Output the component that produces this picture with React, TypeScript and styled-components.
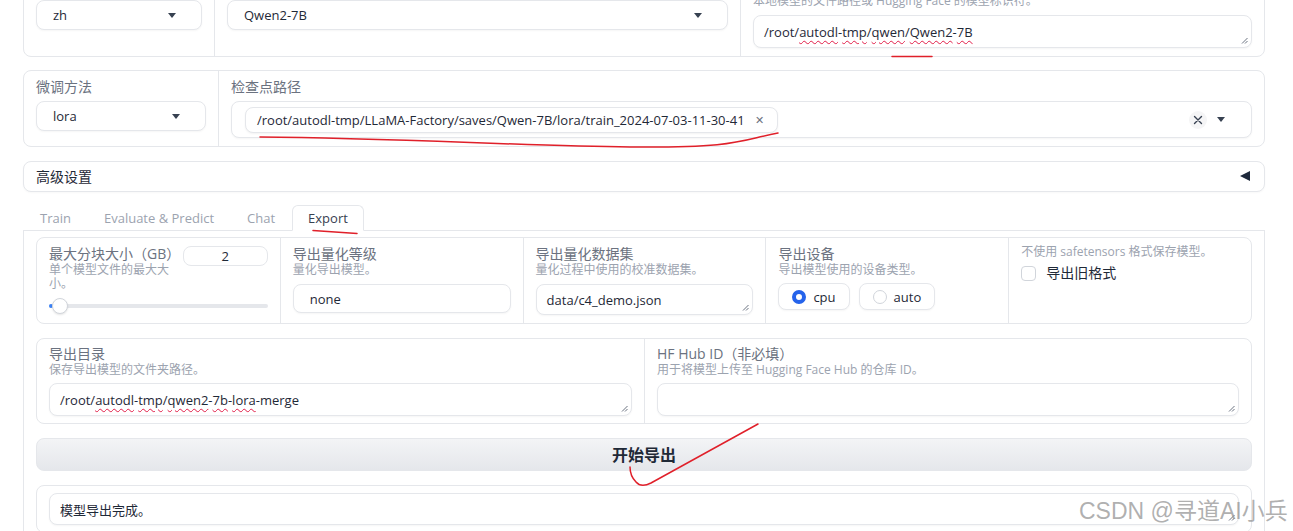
import React from "react";
import styled, { createGlobalStyle } from "styled-components";

const Global = createGlobalStyle`
  html, body { margin: 0; padding: 0; background: #ffffff; }
  body {
    font-family: "Open Sans", "Noto Sans CJK SC", sans-serif;
    color: #1f2937;
    overflow: hidden;
  }
  * { box-sizing: border-box; }
`;

const Page = styled.div`
  position: relative;
  width: 1293px;
  height: 531px;
  overflow: hidden;
`;

const Content = styled.div`
  display: flex;
  flex-direction: column;
  gap: 13px;
  margin: -32px 28px 0 23px;
`;

const Panel = styled.div<{ $cols: string }>`
  display: grid;
  grid-template-columns: ${(p) => p.$cols};
  border: 1px solid #e5e7eb;
  border-radius: 8px;
  background: #fff;
`;

const Col = styled.div<{ $pad?: string }>`
  display: flex;
  flex-direction: column;
  min-width: 0;
  padding: ${(p) => p.$pad ?? "7px 12px 8px"};
  & + & { border-left: 1px solid #e5e7eb; }
`;

const Label = styled.div`
  font-size: 14px;
  line-height: 18px;
  color: #6b7280;
  white-space: nowrap;
`;

const Info = styled.div<{ $maxw?: number }>`
  font-size: 12px;
  line-height: 14px;
  color: #9ca3af;
  max-width: ${(p) => (p.$maxw ? `${p.$maxw}px` : "none")};
`;

const Select = styled.div<{ $h?: number; $mt?: number }>`
  height: ${(p) => p.$h ?? 30}px;
  margin-top: ${(p) => p.$mt ?? 0}px;
  display: flex;
  align-items: center;
  justify-content: space-between;
  padding: 0 25px 0 16px;
  border: 1px solid #e5e7eb;
  border-radius: 8px;
  background: #fff;
  box-shadow: 0 1px 2px rgba(0, 0, 0, 0.04);
  font-size: 13px;
  color: #1f2937;
`;

const Caret = styled.span`
  width: 0;
  height: 0;
  border-left: 4.5px solid transparent;
  border-right: 4.5px solid transparent;
  border-top: 5px solid #374151;
`;

const TextBox = styled.div<{ $h: number; $mt?: number }>`
  position: relative;
  height: ${(p) => p.$h}px;
  margin-top: ${(p) => p.$mt ?? 0}px;
  display: flex;
  align-items: center;
  padding: 0 10px;
  border: 1px solid #e5e7eb;
  border-radius: 8px;
  background: #fff;
  box-shadow: 0 1px 2px rgba(0, 0, 0, 0.04);
  font-size: 13px;
  color: #1f2937;
  white-space: nowrap;
`;

const Sq = styled.span`
  text-decoration: underline wavy #e11d48;
  text-decoration-thickness: 1px;
  text-underline-offset: 3px;
`;

const GripSvg = styled.svg`
  position: absolute;
  right: 3px;
  bottom: 3px;
`;

const Grip = () => (
  <GripSvg width="7" height="7" viewBox="0 0 7 7">
    <path d="M6.5 1 L1 6.5 M6.5 4 L4 6.5" stroke="#6b7280" strokeWidth="1" />
  </GripSvg>
);

const Multi = styled.div`
  height: 37px;
  margin-top: 5px;
  display: flex;
  align-items: center;
  padding: 0 26px 0 13px;
  border: 1px solid #e5e7eb;
  border-radius: 8px;
  background: #fff;
  box-shadow: 0 1px 2px rgba(0, 0, 0, 0.04);
`;

const Chip = styled.div`
  height: 26px;
  display: flex;
  align-items: center;
  gap: 10px;
  padding: 0 13px 0 11px;
  border: 1px solid #e5e7eb;
  border-radius: 8px;
  background: #fff;
  box-shadow: 0 1px 2px rgba(0, 0, 0, 0.05);
  font-size: 13px;
  color: #1f2937;
  white-space: nowrap;
`;

const ChipX = styled.span`
  font-size: 11px;
  color: #6b7280;
`;

const MultiTail = styled.div`
  margin-left: auto;
  display: flex;
  align-items: center;
  gap: 10px;
`;

const ClearBtn = styled.span`
  width: 18px;
  height: 18px;
  border-radius: 50%;
  background: #f5f5f6;
  display: flex;
  align-items: center;
  justify-content: center;
`;

const Accordion = styled.div`
  height: 31px;
  margin-top: 1px;
  display: flex;
  align-items: center;
  justify-content: space-between;
  padding: 0 14px 2px 12px;
  border: 1px solid #e5e7eb;
  border-radius: 8px;
  background: #fff;
  box-shadow: 0 1px 2px rgba(0, 0, 0, 0.03);
  font-size: 14px;
  color: #1f2937;
`;

const LeftTri = styled.span`
  width: 0;
  height: 0;
  border-top: 5px solid transparent;
  border-bottom: 5px solid transparent;
  border-right: 10px solid #1e293b;
`;

const Tabs = styled.div`
  display: flex;
  flex-direction: column;
`;

const TabBar = styled.div`
  height: 26px;
  display: flex;
  gap: 1px;
  padding-left: 1px;
  border-bottom: 1px solid #e5e7eb;
`;

const Tab = styled.div<{ $active?: boolean }>`
  height: 26px;
  margin-bottom: -1px;
  padding: 0 15px 1px;
  display: flex;
  align-items: center;
  font-size: 13px;
  color: ${(p) => (p.$active ? "#374151" : "#9ca3af")};
  border: 1px solid ${(p) => (p.$active ? "#e5e7eb" : "transparent")};
  border-bottom-color: ${(p) => (p.$active ? "#fff" : "transparent")};
  border-radius: 6px 6px 0 0;
  background: ${(p) => (p.$active ? "#fff" : "transparent")};
`;

const TabBody = styled.div`
  display: flex;
  flex-direction: column;
  gap: 14px;
  padding: 6px 12px 40px;
  border: 1px solid #e5e7eb;
  border-top: none;
`;

const SizeRow = styled.div`
  display: flex;
  justify-content: space-between;
  align-items: flex-start;
`;

const SizeText = styled.div`
  display: flex;
  flex-direction: column;
`;

const NumberBox = styled.div`
  width: 85px;
  height: 20px;
  margin-top: 1px;
  display: flex;
  align-items: center;
  justify-content: center;
  border: 1px solid #e5e7eb;
  border-radius: 8px;
  font-size: 13px;
  color: #1f2937;
`;

const Track = styled.div`
  position: relative;
  height: 4px;
  margin: 13px 0 6px;
  border-radius: 2px;
  background: #e5e7eb;
`;

const Fill = styled.div`
  position: absolute;
  left: 0;
  top: 0;
  height: 4px;
  border-radius: 2px;
  background: #3b82f6;
`;

const Thumb = styled.div`
  position: absolute;
  left: 3px;
  top: -6px;
  width: 16px;
  height: 16px;
  border-radius: 50%;
  background: #fff;
  border: 1px solid #d1d5db;
  box-shadow: 0 1px 2px rgba(0, 0, 0, 0.1);
`;

const RadioGroup = styled.div`
  display: flex;
  gap: 9px;
  margin-top: 6px;
`;

const RadioItem = styled.div`
  height: 27px;
  display: flex;
  align-items: center;
  gap: 7px;
  padding: 0 13px;
  border: 1px solid #e5e7eb;
  border-radius: 8px;
  background: #fff;
  box-shadow: 0 1px 2px rgba(0, 0, 0, 0.04);
  font-size: 13px;
  color: #1f2937;
`;

const RadioDot = styled.span<{ $on?: boolean }>`
  width: 14px;
  height: 14px;
  border-radius: 50%;
  background: #fff;
  border: ${(p) => (p.$on ? "4px solid #2563eb" : "1px solid #d1d5db")};
`;

const CheckRow = styled.div`
  display: flex;
  align-items: center;
  gap: 10px;
  margin-top: 5px;
  font-size: 14px;
  line-height: 18px;
  color: #1f2937;
`;

const CheckBox = styled.span`
  width: 15px;
  height: 15px;
  border-radius: 4px;
  border: 1px solid #d1d5db;
  background: #fff;
`;

const RunButton = styled.div`
  height: 33px;
  display: flex;
  align-items: center;
  justify-content: center;
  padding-bottom: 2px;
  border: 1px solid #e5e7eb;
  border-radius: 8px;
  background: linear-gradient(180deg, #f3f4f6, #e5e7eb);
  font-size: 16px;
  font-weight: 700;
  color: #1f2937;
`;

const OutputPanel = styled.div`
  padding: 7px 12px;
  border: 1px solid #e5e7eb;
  border-radius: 8px;
  background: #fff;
`;

const Overlay = styled.svg`
  position: absolute;
  left: 0;
  top: 0;
  pointer-events: none;
`;

const Watermark = styled.div`
  position: absolute;
  left: 1079px;
  top: 492px;
  font-family: "Liberation Sans", "Noto Sans CJK SC", sans-serif;
  font-size: 23px;
  color: rgba(150, 150, 150, 0.75);
  white-space: nowrap;
`;

const XIcon = ({ size = 10, color = "#374151" }: { size?: number; color?: string }) => (
  <svg width={size} height={size} viewBox="0 0 10 10">
    <path d="M1.5 1.5 L8.5 8.5 M8.5 1.5 L1.5 8.5" stroke={color} strokeWidth="1.4" strokeLinecap="round" />
  </svg>
);

export default function App() {
  return (
    <>
      <Global />
      <Page>
        <Content>
          <Panel $cols="190px 526px 1fr">
            <Col>
              <Label>语言</Label>
              <Select $mt={6}>
                zh
                <Caret />
              </Select>
            </Col>
            <Col>
              <Label>模型名称</Label>
              <Select $mt={6}>
                Qwen2-7B
                <Caret />
              </Select>
            </Col>
            <Col>
              <Label>模型路径</Label>
              <Info>本地模型的文件路径或 Hugging Face 的模型标识符。</Info>
              <TextBox $h={33} $mt={7}>
                /root/<Sq>autodl</Sq>-<Sq>tmp</Sq>/<Sq>qwen</Sq>/<Sq>Qwen2</Sq>-<Sq>7B</Sq>
                <Grip />
              </TextBox>
            </Col>
          </Panel>

          <Panel $cols="194px 1fr">
            <Col>
              <Label>微调方法</Label>
              <Select $mt={5}>
                lora
                <Caret />
              </Select>
            </Col>
            <Col>
              <Label>检查点路径</Label>
              <Multi>
                <Chip>
                  /root/autodl-tmp/LLaMA-Factory/saves/Qwen-7B/lora/train_2024-07-03-11-30-41
                  <ChipX>✕</ChipX>
                </Chip>
                <MultiTail>
                  <ClearBtn>
                    <XIcon size={10} />
                  </ClearBtn>
                  <Caret />
                </MultiTail>
              </Multi>
            </Col>
          </Panel>

          <Accordion>
            高级设置
            <LeftTri />
          </Accordion>

          <Tabs>
            <TabBar>
              <Tab>Train</Tab>
              <Tab>Evaluate &amp; Predict</Tab>
              <Tab>Chat</Tab>
              <Tab $active>Export</Tab>
            </TabBar>
            <TabBody>
              <Panel $cols="repeat(5, 1fr)">
                <Col>
                  <SizeRow>
                    <SizeText>
                      <Label>最大分块大小（GB）</Label>
                      <Info $maxw={125}>单个模型文件的最大大小。</Info>
                    </SizeText>
                    <NumberBox>2</NumberBox>
                  </SizeRow>
                  <Track>
                    <Fill style={{ width: 4 }} />
                    <Thumb />
                  </Track>
                </Col>
                <Col>
                  <Label>导出量化等级</Label>
                  <Info>量化导出模型。</Info>
                  <Select $h={29} $mt={7}>none</Select>
                </Col>
                <Col>
                  <Label>导出量化数据集</Label>
                  <Info>量化过程中使用的校准数据集。</Info>
                  <TextBox $h={31} $mt={7}>
                    data/c4_demo.json
                    <Grip />
                  </TextBox>
                </Col>
                <Col>
                  <Label>导出设备</Label>
                  <Info>导出模型使用的设备类型。</Info>
                  <RadioGroup>
                    <RadioItem>
                      <RadioDot $on />
                      cpu
                    </RadioItem>
                    <RadioItem>
                      <RadioDot />
                      auto
                    </RadioItem>
                  </RadioGroup>
                </Col>
                <Col>
                  <Info>不使用 safetensors 格式保存模型。</Info>
                  <CheckRow>
                    <CheckBox />
                    导出旧格式
                  </CheckRow>
                </Col>
              </Panel>

              <Panel $cols="1fr 1fr">
                <Col $pad="6px 12px 7px">
                  <Label>导出目录</Label>
                  <Info>保存导出模型的文件夹路径。</Info>
                  <TextBox $h={33} $mt={6}>
                    /root/<Sq>autodl</Sq>-<Sq>tmp</Sq>/<Sq>qwen2</Sq>-<Sq>7b</Sq>-<Sq>lora</Sq>-merge
                    <Grip />
                  </TextBox>
                </Col>
                <Col $pad="6px 12px 7px">
                  <Label>HF Hub ID（非必填）</Label>
                  <Info>用于将模型上传至 Hugging Face Hub 的仓库 ID。</Info>
                  <TextBox $h={33} $mt={6}>
                    <Grip />
                  </TextBox>
                </Col>
              </Panel>

              <RunButton>开始导出</RunButton>

              <OutputPanel>
                <TextBox $h={32}>
                  模型导出完成。
                  <Grip />
                </TextBox>
              </OutputPanel>
            </TabBody>
          </Tabs>
        </Content>

        <Overlay width="1293" height="531" viewBox="0 0 1293 531">
          <g fill="none" stroke="#e0202a" strokeWidth="1.5" strokeLinecap="round">
            <path d="M892 56.5 L932 56.5" />
            <path d="M260 137 C 400 138, 520 146, 630 147 S 740 140, 778 133" />
            <path d="M313 230.5 Q 335 232 357 233.5" />
            <path d="M758 424 L 651 483 Q 641 488 636 482 Q 630 476 630 467" />
          </g>
        </Overlay>

        <Watermark>CSDN @寻道AI小兵</Watermark>
      </Page>
    </>
  );
}
